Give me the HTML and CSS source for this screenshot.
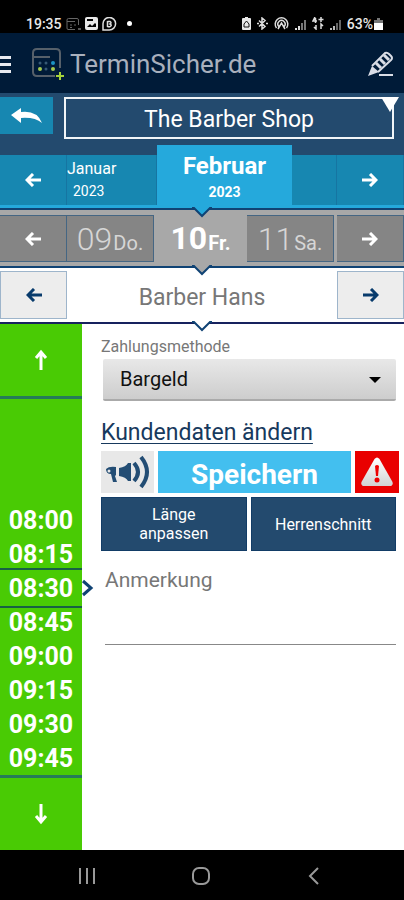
FILE: index.html
```html
<!DOCTYPE html>
<html lang="de">
<head>
    <meta charset="UTF-8">
    <meta name="viewport" content="width=device-width, initial-scale=1.0">
    <title>TerminSicher.de</title>
    <link rel="stylesheet" href="styles.css">
</head>
<body>
    <div class="status-bar">
        <div class="status-left">
            <span>19:35</span>
            <svg width="15" height="14" viewBox="0 0 15 14" fill="none" stroke="#666"><path d="M9 12.500H2Q1 12.500 1 11V3Q1 1.500 2.500 1.500H11Q12.500 1.500 12.500 3V8M1 4.500H9M4 8h2M8 8h2M4 10.500h2"/><path d="M12 12h3" stroke="#aaa"/></svg>
            <svg width="13" height="13" viewBox="0 0 13 13"><rect width="13" height="13" rx="2" fill="#e8e8e8"/><path d="M2 10l3-3 2 2 3-3 1 1v3z" fill="#000"/><rect x="2" y="2" width="6" height="2" fill="#000"/></svg>
            <svg width="15" height="14" viewBox="0 0 15 14" fill="none" stroke="#ddd" stroke-width="1.500"><path d="M1 13V7a6.300 6.300 0 1 1 6.300 6z"/><path d="M5.500 4v6M5.500 4.500h2.500q2 1.200 0 2.500q2.500 1.200 0 2.700H5.500" /></svg>
            <span class="status-dot"></span>
        </div>
        <div class="status-right">
            <svg width="9" height="13" viewBox="0 0 9 13"><path d="M3 0h3v1h2q1 0 1 1v10q0 1-1 1H1q-1 0-1-1V2q0-1 1-1h2z" fill="#e8e8e8"/><path d="M4.500 4L2 7v3h5V7z" fill="none" stroke="#111"/></svg>
            <svg width="11" height="13" viewBox="0 0 11 13" fill="none" stroke="#ddd" stroke-width="1.500"><path d="M2 3.500l6 6-3 2.500V1l3 2.500-6 6M0 6.500h2M9 6.500h2"/></svg>
            <svg width="15" height="13" viewBox="0 0 15 13" fill="none" stroke="#ddd" stroke-width="1.500"><path d="M2.500 11a6.300 6.300 0 1 1 10 0M4.800 9.500a3.600 3.600 0 1 1 5.400 0M4 12l3.500-6 3.500 6"/></svg>
            <svg width="11" height="12" viewBox="0 0 11 12"><path d="M0 10h2v2H0zM3 8h2v4H3z" fill="#ddd"/><path d="M6 5h2v7H6zM9 2h2v10H9z" fill="#777"/></svg>
            <svg width="12" height="13" viewBox="0 0 12 13" fill="none" stroke="#ddd" stroke-width="1.500"><path d="M3 0L1 4h4M3.500 1v5M9 0v5M6.500 2.500h5M4 8v4L2 10M9 12V7l2 2"/></svg>
            <svg width="11" height="12" viewBox="0 0 11 12"><path d="M0 10h2v2H0zM3 8h2v4H3z" fill="#bbb"/><path d="M6 5h2v7H6zM9 2h2v10H9z" fill="#666"/></svg>
            <span>63%</span>
            <svg width="9" height="12" viewBox="0 0 9 12"><path d="M3 0h3v2h3v3H0V2h3z" fill="#777"/><rect y="5" width="9" height="7" fill="#fff"/></svg>
        </div>
    </div>

    <header class="app-header">
        <button class="menu-button" aria-label="Menü">
            <svg width="11" height="17" viewBox="0 0 11 17" fill="#e8eaf0"><path d="M0 0h11v3H0zM0 7h11v3H0zM0 14h11v3H0z"/></svg>
        </button>
        <svg class="logo" width="32" height="32" viewBox="0 0 32 32" fill="none">
            <path d="M23 28H5q-4 0-4-4V5q0-4 4-4h19q4 0 4 4v15M1 9h17" stroke="#56606a" stroke-width="2"/>
            <g fill="#375a75"><circle cx="8" cy="15" r="1.500"/><circle cx="14" cy="15" r="1.500"/><circle cx="14" cy="21" r="1.500"/></g>
            <circle cx="21" cy="15" r="2" fill="#1b93c4"/><circle cx="8" cy="21" r="2" fill="#a6ca4d"/><circle cx="21" cy="21" r="2" fill="#a6ca4d"/>
            <path d="M24 28h8M28 24v8" stroke="#a5d23b" stroke-width="2"/>
        </svg>
        <h1>TerminSicher.de</h1>
        <button class="edit-button" aria-label="Bearbeiten">
            <svg width="26" height="26" viewBox="0 0 26 26" fill="none" stroke="#d9dde6" stroke-width="2">
                <path d="M4 15L17 2q2-1 4 1l2 2q2 2 0 4L10 21"/>
                <path d="M4 15L0 25l11-4z" fill="#d9dde6" stroke="none"/>
                <path d="M8 12l5 5M12 8l5 5M16 4l5 5" stroke-width="3"/>
                <path d="M11 24h14"/>
            </svg>
        </button>
    </header>

    <div class="shop-bar">
        <button class="back-button" aria-label="Zurück">
            <svg width="32" height="16" viewBox="0 0 32 16" fill="#fff"><path d="M0 7L10 0v4Q26 2 31 15Q24 9 10 10v5z"/></svg>
        </button>
        <div class="shop-select">
            <select aria-label="Geschäft"><option>The Barber Shop</option></select>
        </div>
    </div>

    <nav class="months">
        <button class="arrow" aria-label="Vorheriger Monat"><svg width="16" height="14" viewBox="0 0 16 14"><path d="M8 1L2 7l6 6M2 7h14"/></svg></button>
        <button class="month">Januar<small>2023</small></button>
        <button class="month active">Februar<small>2023</small></button>
        <button class="month" aria-label="März"></button>
        <button class="arrow" aria-label="Nächster Monat"><svg width="16" height="14" viewBox="0 0 16 14"><path d="M8 1l6 6-6 6M14 7H0"/></svg></button>
        <svg class="notch" width="20" height="12" viewBox="0 0 20 12"><path d="M0 1h2l8 8 8-8h2"/></svg>
    </nav>

    <nav class="days">
        <button class="arrow" aria-label="Vorheriger Tag"><svg width="16" height="14" viewBox="0 0 16 14"><path d="M8 1L2 7l6 6M2 7h14"/></svg></button>
        <button class="day">09<small>Do.</small></button>
        <button class="day active">10<small>Fr.</small></button>
        <button class="day">11<small>Sa.</small></button>
        <button class="arrow" aria-label="Nächster Tag"><svg width="16" height="14" viewBox="0 0 16 14"><path d="M8 1l6 6-6 6M14 7H0"/></svg></button>
        <svg class="notch" width="20" height="12" viewBox="0 0 20 12"><path d="M0 1h2l8 8 8-8h2"/></svg>
    </nav>

    <nav class="staff">
        <button class="arrow" aria-label="Vorheriger Mitarbeiter"><svg width="16" height="14" viewBox="0 0 16 14"><path d="M8 1L2 7l6 6M2 7h14"/></svg></button>
        <span class="staff-name">Barber Hans</span>
        <button class="arrow" aria-label="Nächster Mitarbeiter"><svg width="16" height="14" viewBox="0 0 16 14"><path d="M8 1l6 6-6 6M14 7H0"/></svg></button>
        <svg class="notch" width="20" height="12" viewBox="0 0 20 12"><path d="M0 1h2l8 8 8-8h2"/></svg>
    </nav>

    <main>
        <aside class="times">
            <button class="scroll-button up" aria-label="Früher"><svg width="14" height="22" viewBox="0 0 14 22"><path d="M2 9l5-6 5 6M7 3v18"/></svg></button>
            <div class="time-list">
                <button class="time">08:00</button>
                <button class="time">08:15</button>
                <button class="time selected">08:30
                    <svg width="12" height="18" viewBox="0 0 12 18"><path d="M1 2l8 7-8 7"/></svg>
                </button>
                <button class="time">08:45</button>
                <button class="time">09:00</button>
                <button class="time">09:15</button>
                <button class="time">09:30</button>
                <button class="time">09:45</button>
            </div>
            <button class="scroll-button down" aria-label="Später"><svg width="14" height="22" viewBox="0 0 14 22"><path d="M2 13l5 6 5-6M7 19V1"/></svg></button>
        </aside>

        <form class="booking">
            <label for="payment">Zahlungsmethode</label>
            <div class="payment-select">
                <select id="payment"><option>Bargeld</option></select>
            </div>
            <a href="#" class="customer-link">Kundendaten ändern</a>
            <div class="actions">
                <button type="button" class="notify" aria-label="Benachrichtigen">
                    <svg width="46" height="34" viewBox="0 0 46 34" fill="#234d74">
                        <path d="M1 14q3-3 10-2v8l-1 1 2 6H8l-2-8q-5 0-5-5z"/>
                        <path d="M14 13q7-1 9-5h3v18h-3q-2-4-9-5z"/>
                        <path d="M29 8q8 9 0 18M36 2q12 15 0 30" fill="none" stroke="#234d74" stroke-width="4"/>
                        <circle cx="4" cy="16" r="1.500" fill="#e8e8e8"/>
                    </svg>
                </button>
                <button type="button" class="save">Speichern</button>
                <button type="button" class="warning" aria-label="Warnung">
                    <svg width="32" height="30" viewBox="0 0 32 30">
                        <defs><linearGradient id="shine" x2="0" y2="1"><stop stop-color="#fff"/><stop offset="1" stop-color="#d2d2d2"/></linearGradient></defs>
                        <path d="M13.500 2q2.500-3 5 0l13 23q1 4-3 4h-25q-4 0-3-4z" fill="url(#shine)"/>
                        <path d="M14 9q2-2 4 0l-1 10h-2z" fill="#e00"/><circle cx="16" cy="23" r="2.500" fill="#e00"/>
                    </svg>
                </button>
            </div>
            <div class="services">
                <button type="button">Länge<br>anpassen</button>
                <button type="button">Herrenschnitt</button>
            </div>
            <div class="note">
                <label for="note">Anmerkung</label>
                <textarea id="note"></textarea>
            </div>
        </form>
    </main>

    <footer class="system-nav">
        <button aria-label="Letzte Apps"><svg width="18" height="18" viewBox="0 0 18 18"><path d="M2 1v16M9 1v16M16 1v16"/></svg></button>
        <button aria-label="Startseite"><svg width="18" height="18" viewBox="0 0 18 18"><rect x="1" y="1" width="16" height="16" rx="6"/></svg></button>
        <button aria-label="Zurück"><svg width="18" height="18" viewBox="0 0 18 18"><path d="M11 1L3 9l8 8"/></svg></button>
    </footer>
</body>
</html>
```
FILE: styles.css
```css
* {
    margin: 0;
    padding: 0;
    box-sizing: border-box;
}

body {
    font-family: Roboto, "Liberation Sans", sans-serif;
    background: #fff;
    min-height: 100vh;
    display: flex;
    flex-direction: column;
}

button {
    font: inherit;
    color: inherit;
    background: none;
    border: none;
    display: flex;
    align-items: center;
    justify-content: center;
    cursor: pointer;
}

select {
    appearance: none;
    font: inherit;
    color: inherit;
    width: 100%;
    border: none;
    border-radius: 0;
}

/* status bar */
.status-bar {
    height: 33px;
    padding: 14px 21px 0 26px;
    background: #000;
    color: #e8e8e8;
    font-size: 14px;
    font-weight: 500;
    display: flex;
    justify-content: space-between;
}

.status-left,
.status-right {
    display: flex;
    align-items: center;
    gap: 4px;
}

.status-right {
    gap: 6px;
}

.status-right span {
    margin-right: -5px;
}

.status-dot {
    width: 5px;
    height: 5px;
    margin-left: 6px;
    border-radius: 50%;
    background: #fff;
}

/* header */
.app-header {
    height: 60px;
    padding: 2px 10px 0 0;
    background: #001b38;
    color: #a9b0bd;
    display: flex;
    align-items: center;
}

.app-header h1 {
    flex: 1;
    font-size: 26px;
    font-weight: 400;
}

.logo {
    margin: 0 6px 0 21px;
}

/* shop */
.shop-bar {
    padding: 4px 10px 6px 0;
    background: #234a6e;
    color: #fff;
    display: flex;
    gap: 11px;
}

.back-button {
    width: 53px;
    height: 37px;
    background: #1787b1;
}

.shop-select {
    flex: 1;
    position: relative;
}

.shop-select select {
    height: 42px;
    padding-top: 3px;
    background: none;
    border: 2px solid #f1f5f8;
    font-size: 23px;
    text-align: center;
    text-align-last: center;
}

.shop-select::after {
    content: "";
    position: absolute;
    top: 0;
    right: -5px;
    border: 9px solid transparent;
    border-top: 15px solid #fff;
    border-bottom: 0;
}

/* months, days, staff */
.months,
.days,
.staff {
    position: relative;
    display: grid;
    border-bottom: 2px solid #104374;
}

.arrow path {
    fill: none;
    stroke: currentColor;
    stroke-width: 3;
}

.notch {
    position: absolute;
    bottom: -11px;
    left: calc(50% - 10px);
    z-index: 1;
    fill: #fff;
    stroke: #104374;
    stroke-width: 2;
}

.months {
    grid-template-columns: 67px 2fr 3fr 1fr 67px;
    height: 65px;
    background: linear-gradient(#234a6e 60px, #25a9dc 60px);
    color: #fff;
}

.months button {
    height: 50px;
    margin-top: 10px;
    background: #1787b1;
    border-right: 1px solid #1675a2;
}

.months .month {
    flex-direction: column;
    align-items: flex-start;
    font-size: 16px;
    line-height: 22px;
}

.month small {
    font-size: 14px;
    padding-left: 6px;
}

.months .active {
    height: 63px;
    margin-top: 0;
    padding-top: 4px;
    align-items: center;
    background: #25a9dc;
    border: none;
    font-size: 24px;
    font-weight: 700;
    line-height: 26px;
}

.months .active small {
    padding: 0;
}

.months .notch {
    fill: #25a9dc;
}

.days {
    grid-template-columns: 67px repeat(3, 1fr) 67px;
    height: 58px;
    padding: 5px 0 4px;
    background: #a8a8a8;
    color: #fff;
}

.days button {
    background: #858585;
    border: 1px solid #456683;
    border-left: 0;
}

.days .day {
    align-items: baseline;
    gap: 1px;
    margin-right: 3px;
    padding-top: 5px;
    color: #d6d6d6;
    font-size: 32px;
    font-weight: 300;
    line-height: 36px;
}

.day small {
    font-size: 20px;
    font-weight: 400;
    line-height: 20px;
    padding-top: 4px;
    align-self: center;
}

.days .active {
    background: none;
    border: none;
    color: #fff;
    font-weight: 700;
}

.active small {
    font-weight: 700;
}

.days .notch {
    fill: #a8a8a8;
}

.staff {
    grid-template-columns: 67px 1fr 67px;
    height: 56px;
    padding: 3px 0;
    color: #777;
    border-color: #17225e;
}

.staff .arrow {
    background: #ededed;
    border: 1px solid #9eb5cb;
    color: #083b6c;
}

.staff-name {
    align-self: center;
    font-size: 23px;
    text-align: center;
    padding-top: 4px;
}

/* content */
main {
    flex: 1;
    display: flex;
}

.times {
    width: 82px;
    background: #49cb04;
    color: #fff;
    display: flex;
    flex-direction: column;
}

.scroll-button {
    width: 100%;
    height: 75px;
}

.scroll-button path {
    fill: none;
    stroke: #fff;
    stroke-width: 3;
}

.scroll-button.up {
    border-bottom: 3px solid #267b58;
}

.scroll-button.down {
    border-top: 3px solid #267b58;
}

.time-list {
    flex: 1;
    display: flex;
    flex-direction: column;
    justify-content: flex-end;
}

.time {
    width: 100%;
    height: 34px;
    font-size: 25px;
    font-weight: 700;
}

.time.selected {
    position: relative;
    height: 40px;
    margin: -3px 0;
    border: 2px solid #176044;
    border-width: 2px 0;
}

.selected svg {
    position: absolute;
    left: 100%;
    fill: #fff;
    stroke: #104374;
    stroke-width: 3;
}

.booking {
    flex: 1;
    padding: 13px 8px 0 19px;
}

.booking label {
    display: block;
    color: #777;
    font-size: 16px;
    line-height: 20px;
}

.payment-select {
    position: relative;
    margin: 2px 0 0 2px;
}

.payment-select select {
    height: 42px;
    padding-left: 17px;
    background: linear-gradient(#e8e8e8, #cdcdcd);
    border-bottom: 2px solid #aaa;
    border-radius: 2px;
    color: #111;
    font-size: 20px;
}

.payment-select::after {
    content: "";
    position: absolute;
    top: 18px;
    right: 15px;
    border: 6px solid transparent;
    border-top-color: #000;
    border-bottom: 0;
}

.customer-link {
    display: block;
    margin-top: 17px;
    color: #17395d;
    font-size: 23px;
    line-height: 30px;
    text-decoration-thickness: 1px;
    text-underline-offset: 3px;
}

.actions {
    display: flex;
    gap: 4px;
    margin: 3px -3px 0 0;
}

.actions button {
    height: 42px;
}

.notify {
    width: 53px;
    background: #e8e8e8;
}

.actions .save {
    flex: 1;
    padding-top: 4px;
    background: #43bfef;
    color: #fff;
    font-size: 28px;
    font-weight: 700;
}

.warning {
    width: 44px;
    background: #e90000;
}

.services {
    display: grid;
    grid-template-columns: 1fr 1fr;
    gap: 4px;
    margin-top: 4px;
}

.services button {
    height: 54px;
    background: #234a6e;
    border: 1px solid #123c66;
    color: #fff;
    font-size: 16px;
    line-height: 19px;
}

.note {
    margin: 16px 0 0 4px;
}

.note label {
    font-size: 21px;
    line-height: 26px;
}

.note textarea {
    display: block;
    width: 100%;
    height: 52px;
    border: none;
    border-bottom: 1px solid #888;
    font: inherit;
    font-size: 20px;
    resize: none;
    outline: none;
}

/* system navigation */
.system-nav {
    height: 50px;
    padding: 2px 31px 0 30px;
    background: #000;
    display: flex;
}

.system-nav button {
    flex: 1;
}

.system-nav svg {
    fill: none;
    stroke: #999;
    stroke-width: 2;
}
```
